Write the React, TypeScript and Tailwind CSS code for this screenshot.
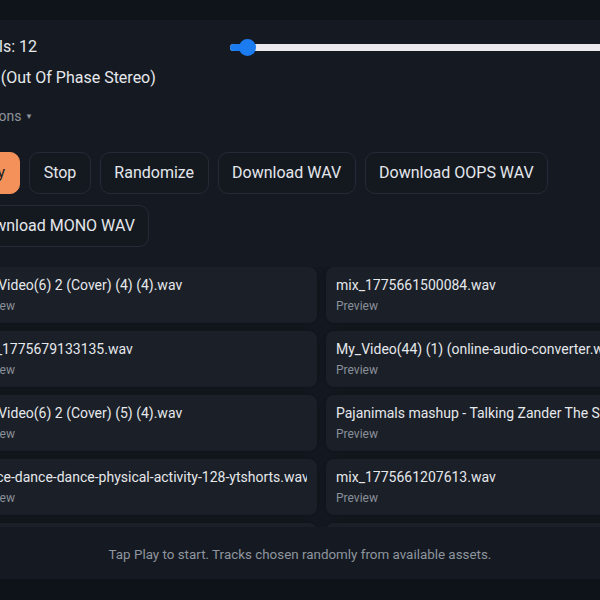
const tracks = [
  "My_Video(6) 2 (Cover) (4) (4).wav",
  "mix_1775661500084.wav",
  "mix_1775679133135.wav",
  "My_Video(44) (1) (online-audio-converter.wav).wav",
  "My_Video(6) 2 (Cover) (5) (4).wav",
  "Pajanimals mashup - Talking Zander The Sheep.wav",
  "dance-dance-dance-physical-activity-128-ytshorts.wav",
  "mix_1775661207613.wav",
  "My_Video(12) (Cover).wav",
  "mix_1775660931522.wav",
];

const Slider = () => (
  <div className="relative w-[407px] h-[18px] flex items-center">
    <div className="h-[7px] w-full rounded-full bg-[#e9e9ee]" />
    <div className="absolute left-0 top-[5.5px] h-[7px] w-[18px] rounded-l-full bg-[#1b7cf2]" />
    <div className="absolute left-[9px] top-[0.5px] h-[17px] w-[17px] rounded-full bg-[#1b7cf2]" />
  </div>
);

const Button = ({ label, primary }: { label: string; primary?: boolean }) => (
  <button
    className={
      primary
        ? "h-[42px] px-[14px] rounded-[10px] bg-[#f4915b] text-[#1b1d22] text-base border border-[#f4915b]"
        : "h-[42px] px-[13.5px] rounded-[10px] bg-[#141920] text-[#e4e7ec] text-base border border-[#242b36]"
    }
  >
    {label}
  </button>
);

export default function App() {
  return (
    <div
      className="w-[600px] h-[600px] overflow-hidden bg-[#0e1219]"
      style={{ fontFamily: "Roboto, 'Liberation Sans', sans-serif" }}
    >
      <div className="h-[20px] bg-[#0f141b]" />
      <div className="-ml-[53px] w-[706px] bg-[#151a22] px-[16px] pt-[15px] pb-[14px]">
        <div className="flex items-center">
          <span className="text-base leading-6 text-[#e6e8eb]">Vocals: 12</span>
          <div className="ml-auto">
            <Slider />
          </div>
        </div>
        <div className="mt-[7px] ml-[8px] text-base leading-6 text-[#e6e8eb]">Mix (Out Of Phase Stereo)</div>
        <div className="mt-[16px] ml-[10px] text-sm leading-5 text-[#8d939c]">
          Options <span className="text-[8px] align-middle">▼</span>
        </div>
        <div className="mt-[25px] -ml-[3px] flex flex-wrap gap-x-[9px] gap-y-[11px]">
          <Button label="Play" primary />
          <Button label="Stop" />
          <Button label="Randomize" />
          <Button label="Download WAV" />
          <Button label="Download OOPS WAV" />
          <Button label="Download MONO WAV" />
        </div>
        <div className="mt-[20px] h-[260px] overflow-hidden">
          <div className="grid grid-cols-[354px_354px] gap-x-[9px] gap-y-[8px]">
            {tracks.map((t) => (
              <div
                key={t}
                className="h-[56px] rounded-lg bg-[#1a1f28] px-[10px] pt-[8px] shadow-[0_0_8px_rgba(0,0,0,0.35)]"
              >
                <div className="text-sm leading-5 text-[#e6e8eb] whitespace-nowrap overflow-hidden">{t}</div>
                <div className="mt-[3px] text-xs leading-4 text-[#8a9099]">Preview</div>
              </div>
            ))}
          </div>
        </div>
        <p className="mt-[18px] text-center text-[13.4px] leading-5 text-[#8f959e]">
          Tap Play to start. Tracks chosen randomly from available assets.
        </p>
      </div>
    </div>
  );
}
